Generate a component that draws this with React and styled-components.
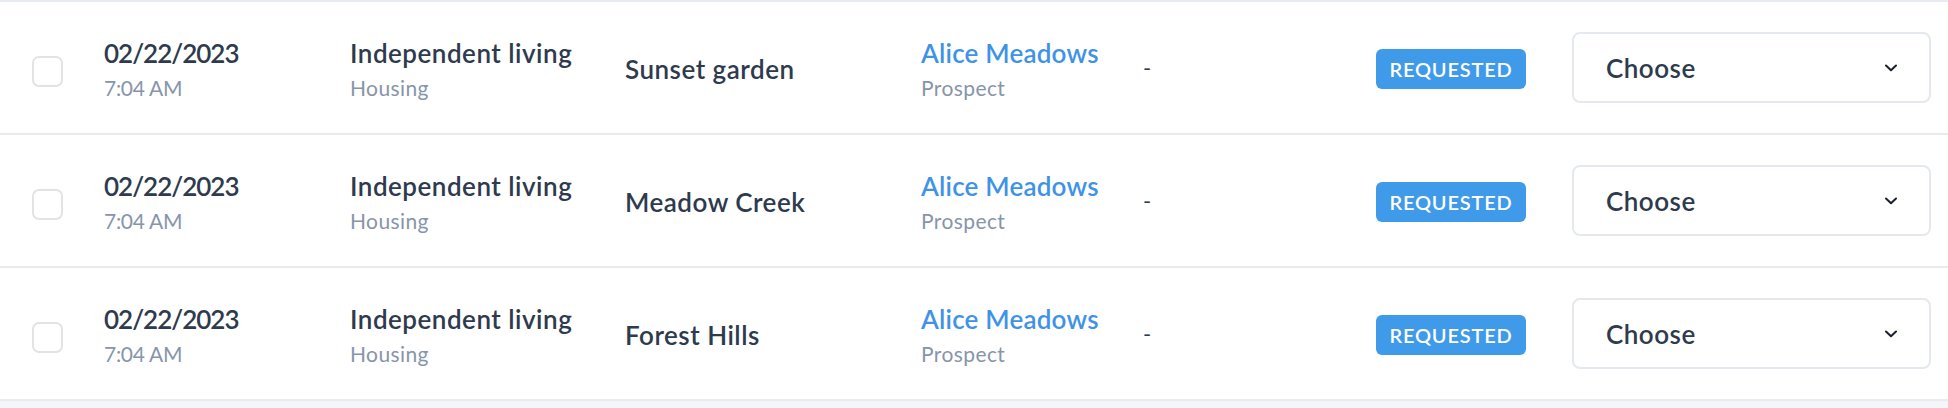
import React from "react";
import styled, { createGlobalStyle } from "styled-components";

const Global = createGlobalStyle`
  html, body { margin: 0; padding: 0; background: #ffffff; }
  body { font-family: Lato, "Liberation Sans", sans-serif; }
`;

const Table = styled.div`
  width: 1948px;
  border-top: 2px solid #e7ebf0;
  background: #ffffff;
`;

const Row = styled.div`
  display: grid;
  grid-template-columns: 72px 246px 275px 296px 222px 233px 196px 359px;
  align-items: center;
  height: 131px;
  padding: 0 17px 0 32px;
  border-bottom: 2px solid #e7ebf0;
  background: #ffffff;
`;

const Footer = styled.div`
  height: 8px;
  background: #f3f5f8;
`;

const Check = styled.span`
  display: block;
  width: 27px;
  height: 27px;
  border: 2px solid #e3e3e3;
  border-radius: 7px;
  margin-top: 8px;
  background: #fff;
`;

const Stack = styled.div`
  display: flex;
  flex-direction: column;
  margin-top: 5px;
`;

const Primary = styled.span`
  font-size: 26px;
  font-weight: 600;
  line-height: 32px;
  letter-spacing: ${(p) => (p.$tight ? "-1px" : p.$link ? "0.2px" : "0.5px")};
  color: ${(p) => (p.$link ? "#3f93e6" : "#2e3a4d")};
  white-space: nowrap;
`;

const Secondary = styled.span`
  font-size: 21px;
  font-weight: 400;
  line-height: 32px;
  margin-top: 3px;
  letter-spacing: ${(p) => (p.$tight ? "-0.3px" : "0.4px")};
  color: #8795aa;
  white-space: nowrap;
`;

const Plain = styled.span`
  font-size: 26px;
  font-weight: 600;
  line-height: 32px;
  margin-top: 3px;
  letter-spacing: 0.5px;
  color: #2e3a4d;
  white-space: nowrap;
`;

const Dash = styled.span`
  font-size: 22px;
  color: #2e3a4d;
  line-height: 32px;
`;

const Badge = styled.span`
  justify-self: start;
  display: inline-flex;
  align-items: center;
  justify-content: center;
  width: 150px;
  height: 40px;
  box-sizing: border-box;
  margin-top: 3px;
  border-radius: 6px;
  background: #409aea;
  color: #ffffff;
  font-size: 20px;
  font-weight: 600;
  letter-spacing: 0.8px;
`;

const Select = styled.div`
  display: flex;
  align-items: center;
  justify-content: space-between;
  height: 71px;
  box-sizing: border-box;
  padding: 0 32px 0 32px;
  border: 2px solid #e5e9ef;
  border-radius: 8px;
  background: #fff;
`;

const SelectText = styled.span`
  font-size: 26px;
  font-weight: 600;
  letter-spacing: 0.5px;
  color: #2e3a4d;
`;

const Chevron = () => (
  <svg width="12" height="8" viewBox="0 0 12 8" fill="none">
    <path d="M1 1.5 L6 6.2 L11 1.5" stroke="#1a202c" strokeWidth="2" strokeLinecap="round" strokeLinejoin="round" />
  </svg>
);

const rows = ["Sunset garden", "Meadow Creek", "Forest Hills"];

export default function App() {
  return (
    <>
      <Global />
      <Table>
        {rows.map((name) => (
          <Row key={name}>
            <Check />
            <Stack>
              <Primary $tight>02/22/2023</Primary>
              <Secondary $tight>7:04 AM</Secondary>
            </Stack>
            <Stack>
              <Primary>Independent living</Primary>
              <Secondary>Housing</Secondary>
            </Stack>
            <Plain>{name}</Plain>
            <Stack>
              <Primary $link>Alice Meadows</Primary>
              <Secondary>Prospect</Secondary>
            </Stack>
            <Dash>-</Dash>
            <Badge>REQUESTED</Badge>
            <Select>
              <SelectText>Choose</SelectText>
              <Chevron />
            </Select>
          </Row>
        ))}
      </Table>
      <Footer />
    </>
  );
}
